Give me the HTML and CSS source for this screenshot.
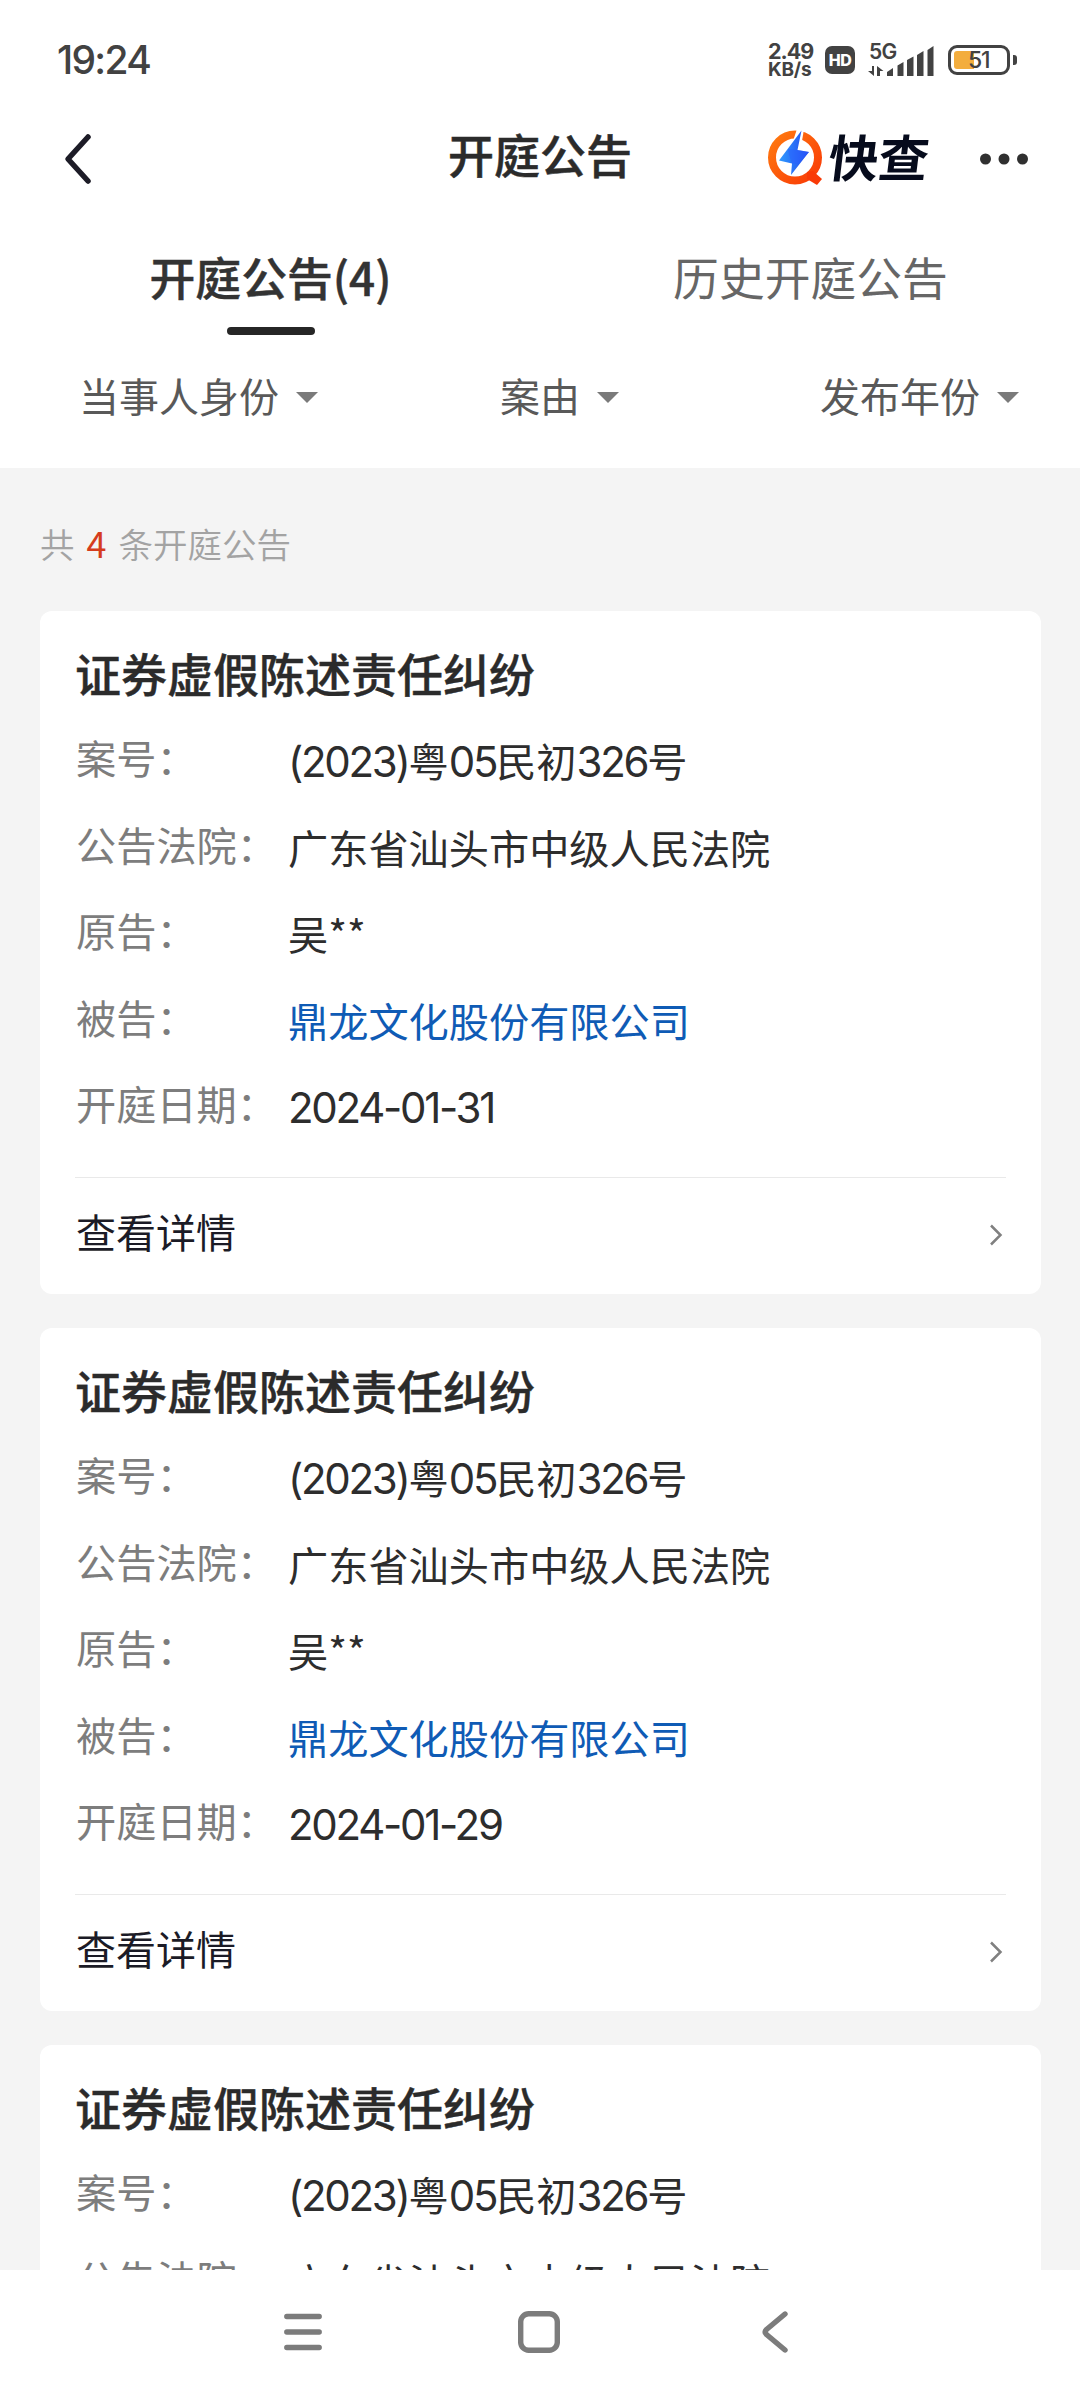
FILE: index.html
```html
<!DOCTYPE html>
<html lang="zh-CN">
<head>
<meta charset="utf-8">
<title>开庭公告</title>
<link rel="stylesheet" href="styles.css">
</head>
<body>
<div class="screen">
  <header class="top">
    <div class="status">
      <span class="time">19:24</span>
      <div class="indicators">
        <div class="speed"><span>2.49</span><span class="unit">KB/s</span></div>
        <span class="hd">HD</span>
        <div class="signal">
          <span class="net">5G</span>
          <svg class="bars" width="66" height="30" viewBox="0 0 66 30">
            <path d="M6 20v10L0 25h4v-5zM9 30V20l6.500 5H12v5z"/>
            <path d="M19 26l6-4v8h-6zM29.500 19.500l6-3.500v14h-6zM39 14l6.500-3.500V30H39zM49 9l6.500-4v25H49zM59.500 4l6-4v30h-6z"/>
          </svg>
        </div>
        <div class="battery"><span class="cell"><span class="charge">51</span></span><span class="nub"></span></div>
      </div>
    </div>
    <div class="navbar">
      <svg class="back" width="30" height="54" viewBox="0 0 30 54"><path d="M25 5L5 27l20 22"/></svg>
      <h1>开庭公告</h1>
      <div class="tools">
        <svg class="mark" width="58" height="58" viewBox="0 0 58 58">
          <defs>
            <linearGradient id="ring" x1="0" y1="0" x2="1" y2="1"><stop offset="0" stop-color="#ff7a10"/><stop offset="1" stop-color="#f93a06"/></linearGradient>
            <linearGradient id="bolt" x1="0" y1="0" x2="1" y2="0"><stop offset="0" stop-color="#2f9bff"/><stop offset="1" stop-color="#2447ee"/></linearGradient>
          </defs>
          <circle cx="28" cy="28.500" r="23" fill="none" stroke="url(#ring)" stroke-width="8"/>
          <path d="M40 43l6-1 9 8-5 6-10-6z" fill="#f93a06"/>
          <path d="M30 0h7l-2 12h-9z" fill="#fff"/>
          <path d="M34.500 1.500L12 31.500l13 3L24 46l18-23-11.500-2z" fill="url(#bolt)"/>
          <path d="M21 20l9.500 1L42 23 31 35l-6-.5-3-9z" fill="#2a5fff" opacity=".5"/>
        </svg>
        <span class="brand">快查</span>
        <svg class="more" width="50" height="12" viewBox="0 0 50 12"><circle cx="6.500" cy="6" r="5.500"/><circle cx="25" cy="6" r="5.500"/><circle cx="43.500" cy="6" r="5.500"/></svg>
      </div>
    </div>
    <nav class="tabs">
      <a class="tab active">开庭公告<span class="count">(4)</span></a>
      <a class="tab">历史开庭公告</a>
    </nav>
    <div class="filters">
      <span class="filter">当事人身份<i class="caret"></i></span>
      <span class="filter">案由<i class="caret"></i></span>
      <span class="filter">发布年份<i class="caret"></i></span>
    </div>
  </header>
  <main class="list">
    <p class="summary">共<b>4</b>条开庭公告</p>
    <article class="card">
      <h2>证券虚假陈述责任纠纷</h2>
      <dl>
        <dt>案号：</dt><dd><span class="num">(2023)</span>粤<span class="num">05</span>民初<span class="num">326</span>号</dd>
        <dt>公告法院：</dt><dd>广东省汕头市中级人民法院</dd>
        <dt>原告：</dt><dd>吴<span class="stars">**</span></dd>
        <dt>被告：</dt><dd class="link">鼎龙文化股份有限公司</dd>
        <dt>开庭日期：</dt><dd><span class="num">2024-01-31</span></dd>
      </dl>
      <div class="detail"><span>查看详情</span><svg width="16" height="24" viewBox="0 0 16 24"><path d="M3 2.500l9.500 9.500L3 21.500"/></svg></div>
    </article>
    <article class="card">
      <h2>证券虚假陈述责任纠纷</h2>
      <dl>
        <dt>案号：</dt><dd><span class="num">(2023)</span>粤<span class="num">05</span>民初<span class="num">326</span>号</dd>
        <dt>公告法院：</dt><dd>广东省汕头市中级人民法院</dd>
        <dt>原告：</dt><dd>吴<span class="stars">**</span></dd>
        <dt>被告：</dt><dd class="link">鼎龙文化股份有限公司</dd>
        <dt>开庭日期：</dt><dd><span class="num">2024-01-29</span></dd>
      </dl>
      <div class="detail"><span>查看详情</span><svg width="16" height="24" viewBox="0 0 16 24"><path d="M3 2.500l9.500 9.500L3 21.500"/></svg></div>
    </article>
    <article class="card">
      <h2>证券虚假陈述责任纠纷</h2>
      <dl>
        <dt>案号：</dt><dd><span class="num">(2023)</span>粤<span class="num">05</span>民初<span class="num">326</span>号</dd>
        <dt>公告法院：</dt><dd>广东省汕头市中级人民法院</dd>
      </dl>
    </article>
  </main>
  <footer class="sysnav">
    <svg width="38" height="38" viewBox="0 0 38 38"><path d="M2.800 3.500h32.400M2.800 19h32.400M2.800 34.500h32.400"/></svg>
    <svg width="42" height="42" viewBox="0 0 42 42"><rect x="2.700" y="2.700" width="36.600" height="36.600" rx="8"/></svg>
    <svg width="28" height="42" viewBox="0 0 28 42"><path d="M24 3L5.500 18.500q-2.500 2.500 0 5L24 39"/></svg>
  </footer>
</div>
</body>
</html>
```
FILE: styles.css
```css
* { box-sizing: border-box; }
body {
  margin: 0;
  font-family: "Noto Sans CJK SC", sans-serif;
  color: #2b2b2b;
  background: #f4f4f4;
}
h1, h2, p, dl, dd { margin: 0; }
svg { flex: none; display: block; }

.screen {
  width: 1080px;
  height: 2400px;
  display: flex;
  flex-direction: column;
  overflow: hidden;
}

/* header */
.top { flex: none; height: 468px; background: #fff; }
.status {
  height: 120px;
  padding: 0 63px 0 57px;
  display: flex;
  align-items: center;
  justify-content: space-between;
  font-family: Inter, sans-serif;
  color: #424242;
}
.time { font-size: 39px; font-weight: 500; letter-spacing: -1.7px; line-height: 48px; }
.indicators { display: flex; align-items: center; }
.speed {
  width: 57px;
  display: flex;
  flex-direction: column;
  gap: 1px;
  font-size: 21.500px;
  font-weight: 700;
  line-height: 18px;
  letter-spacing: -1px;
}
.speed .unit { font-size: 19px; letter-spacing: -.2px; }
.hd {
  width: 30px;
  height: 28px;
  border-radius: 7px;
  background: #424242;
  color: #fff;
  font-size: 16px;
  font-weight: 800;
  line-height: 28px;
  text-align: center;
  letter-spacing: -.5px;
}
.signal { display: grid; margin-left: 13px; width: 66px; height: 32px; }
.signal > * { grid-area: 1 / 1; }
.net { font-size: 21px; font-weight: 600; line-height: 16px; padding-left: 1px; letter-spacing: -.8px; }
.bars { fill: #424242; margin-top: 2px; }
.battery { display: flex; align-items: center; gap: 3px; margin-left: 14px; }
.cell {
  width: 62px;
  height: 30px;
  border: 3px solid #424242;
  border-radius: 9px;
  padding: 3px;
}
.charge {
  display: block;
  height: 18px;
  border-radius: 3px;
  background: linear-gradient(90deg, #f3ad3d 20px, transparent 20px);
  padding-left: 14px;
  font-size: 23px;
  font-weight: 500;
  line-height: 18px;
  letter-spacing: -1.2px;
}
.nub { width: 4px; height: 10px; border-radius: 0 3px 3px 0; background: #424242; }

.navbar {
  height: 76px;
  padding: 0 51px 0 63px;
  display: grid;
  grid-template-columns: 1fr auto 1fr;
  align-items: center;
}
.back { fill: none; stroke: #1d1c27; stroke-width: 5.500; stroke-linecap: round; stroke-linejoin: round; }
h1 {
  margin: 0 6px 0 -6px;
  padding-bottom: 11px;
  font-size: 46px;
  line-height: 66px;
  font-weight: 500;
  -webkit-text-stroke: .5px currentColor;
}
.tools { display: flex; align-items: center; justify-content: flex-end; padding-bottom: 2px; }
.brand {
  margin-left: 4px;
  font-size: 50px;
  line-height: 60px;
  font-weight: 700;
  color: #060b1c;
  transform: skewX(-7deg);
  padding-bottom: 5px;
}
.more { fill: #303030; margin: 2px 0 0 50px; }

.tabs { display: grid; grid-template-columns: 1fr 1fr; height: 142px; }
.tab {
  display: flex;
  justify-content: center;
  padding: 47px 0 0 1px;
  font-size: 45.800px;
  line-height: 66px;
  color: #666;
  position: relative;
}
.tab.active { color: #333; font-weight: 500; -webkit-text-stroke: .5px currentColor; }
.tab.active::after {
  content: "";
  position: absolute;
  left: 227px;
  top: 131px;
  width: 88px;
  height: 8px;
  border-radius: 4px;
  background: #262626;
}
.count { font-weight: 500; }

.filters {
  display: grid;
  grid-template-columns: 421px 320px auto;
  padding: 27px 0 0 79px;
  font-size: 40px;
  line-height: 60px;
  color: #595959;
}
.filter { display: flex; align-items: center; gap: 17px; }
.caret {
  border: 11px solid transparent;
  border-top-color: #7a7a7a;
  border-bottom: 0;
  margin-top: 5px;
}

/* list */
.list { flex: 1; min-height: 0; padding: 0 39px 0 40px; overflow: hidden; }
.summary {
  height: 143px;
  padding-top: 50px;
  font-size: 34.500px;
  line-height: 50px;
  font-weight: 350;
  color: #a3a3a3;
}
.summary b { color: #d53c1d; font-weight: 400; font-size: 36px; line-height: 1; margin: 0 12px; }

.card {
  height: 683px;
  margin-bottom: 34px;
  padding: 0 35px;
  border-radius: 12px;
  background: #fff;
}
h2 {
  height: 103px;
  padding-top: 28px;
  font-size: 46px;
  line-height: 66px;
  font-weight: 500;
  -webkit-text-stroke: .4px currentColor;
}
dl {
  height: 463px;
  display: grid;
  grid-template-columns: 212px 1fr;
  grid-auto-rows: 86.500px;
  padding-left: 1px;
  font-size: 40.200px;
  line-height: 86.500px;
}
dt { color: #7d7d7d; white-space: nowrap; }
dd { color: #2d2d2d; padding-top: 3px; white-space: nowrap; }
.num { font-family: Inter, sans-serif; font-size: 42px; letter-spacing: -2.300px; line-height: 1; }
.link { color: #0f5bb5; }
.detail {
  height: 117px;
  border-top: 1px solid #e9e9e9;
  display: flex;
  align-items: center;
  justify-content: space-between;
  padding: 0 2px 0 1px;
  font-size: 40px;
  line-height: 60px;
  color: #1b1b26;
}
.detail span { padding-bottom: 10px; }
.detail svg { fill: none; stroke: #808080; stroke-width: 2.500; margin-bottom: 2px; }

/* system navigation */
.sysnav {
  flex: none;
  height: 130px;
  padding: 0 291px 6px 284px;
  background: #fff;
  display: grid;
  grid-template-columns: 234px 243px 28px;
  align-items: center;
}
.sysnav svg { fill: none; stroke: #7c7c7c; stroke-width: 5.400; stroke-linecap: round; stroke-linejoin: round; }
```
